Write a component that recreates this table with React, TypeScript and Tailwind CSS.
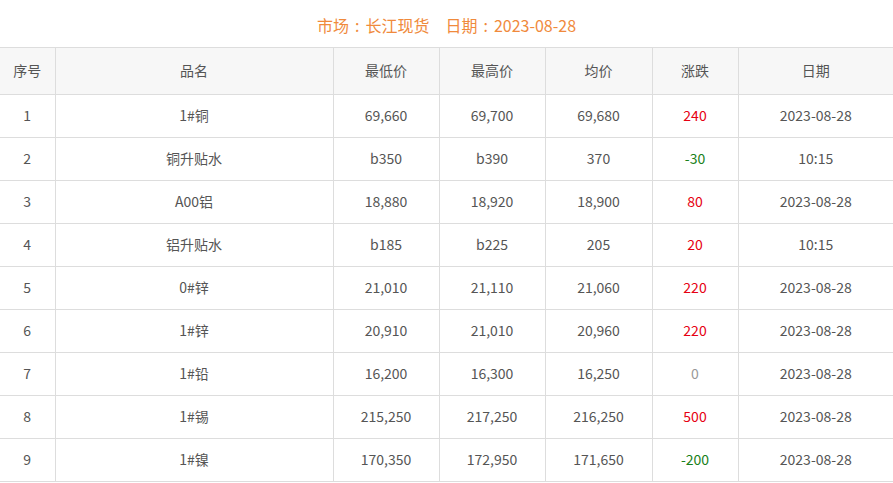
const HEADERS = ["序号", "品名", "最低价", "最高价", "均价", "涨跌", "日期"];

type Row = {
  no: number;
  name: string;
  low: string;
  high: string;
  avg: string;
  change: number;
  date: string;
};

const ROWS: Row[] = [
  { no: 1, name: "1#铜", low: "69,660", high: "69,700", avg: "69,680", change: 240, date: "2023-08-28" },
  { no: 2, name: "铜升贴水", low: "b350", high: "b390", avg: "370", change: -30, date: "10:15" },
  { no: 3, name: "A00铝", low: "18,880", high: "18,920", avg: "18,900", change: 80, date: "2023-08-28" },
  { no: 4, name: "铝升贴水", low: "b185", high: "b225", avg: "205", change: 20, date: "10:15" },
  { no: 5, name: "0#锌", low: "21,010", high: "21,110", avg: "21,060", change: 220, date: "2023-08-28" },
  { no: 6, name: "1#锌", low: "20,910", high: "21,010", avg: "20,960", change: 220, date: "2023-08-28" },
  { no: 7, name: "1#铅", low: "16,200", high: "16,300", avg: "16,250", change: 0, date: "2023-08-28" },
  { no: 8, name: "1#锡", low: "215,250", high: "217,250", avg: "216,250", change: 500, date: "2023-08-28" },
  { no: 9, name: "1#镍", low: "170,350", high: "172,950", avg: "171,650", change: -200, date: "2023-08-28" },
];

const COL_W = ["w-[55px]", "w-[278px]", "w-[106px]", "w-[106px]", "w-[107px]", "w-[86px]", "w-[155px]"];

function changeColor(v: number) {
  if (v > 0) return "text-[#e60012]";
  if (v < 0) return "text-[#1a7f1a]";
  return "text-[#999999]";
}

export default function App() {
  return (
    <div
      className="w-[893px] h-[483px] overflow-hidden bg-white text-[14px] text-[#555555]"
      style={{ fontFamily: '"Noto Sans CJK SC", "Noto Sans", sans-serif' }}
    >
      <div className="h-[47px] flex items-center justify-center text-[16px] text-[#f08a3c] pt-[2px]">
        <span>市场</span>
        <span className="px-[6px]">:</span>
        <span>长江现货</span>
        <span className="w-[16px]" />
        <span>日期</span>
        <span className="px-[6px]">:</span>
        <span>2023-08-28</span>
      </div>
      <table className="w-[893px] table-fixed border-collapse">
        <colgroup>
          {COL_W.map((w, i) => (
            <col key={i} className={w} />
          ))}
        </colgroup>
        <thead>
          <tr className="h-[47px] bg-[#f7f7f7]">
            {HEADERS.map((h) => (
              <th key={h} className="border border-[#dddddd] font-normal text-center pb-[2px] first:border-l-0 last:border-r-0">
                {h}
              </th>
            ))}
          </tr>
        </thead>
        <tbody>
          {ROWS.map((r) => (
            <tr key={r.no} className="h-[43px] [&>td]:pb-[2px]">
              <td className="border border-[#dddddd] border-l-0 text-center">{r.no}</td>
              <td className="border border-[#dddddd] text-center">{r.name}</td>
              <td className="border border-[#dddddd] text-center">{r.low}</td>
              <td className="border border-[#dddddd] text-center">{r.high}</td>
              <td className="border border-[#dddddd] text-center">{r.avg}</td>
              <td className={`border border-[#dddddd] text-center ${changeColor(r.change)}`}>{r.change}</td>
              <td className="border border-[#dddddd] border-r-0 text-center">{r.date}</td>
            </tr>
          ))}
        </tbody>
      </table>
    </div>
  );
}
